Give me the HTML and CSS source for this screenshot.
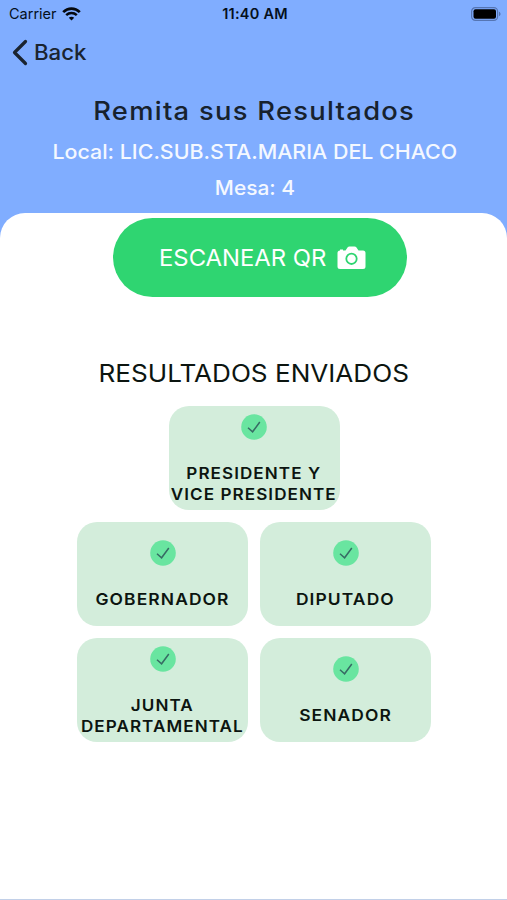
FILE: index.html
```html
<!DOCTYPE html>
<html lang="es">
<head>
<meta charset="utf-8">
<title>Remita sus Resultados</title>
<link rel="stylesheet" href="styles.css">
</head>
<body>
<header class="header">
  <div class="status">
    <div class="carrier"><span>Carrier</span>
      <svg width="19" height="14" viewBox="0 0 19 14" fill="none" stroke="#05080d"><path d="M1.200 5.100C6 .4 13 .4 17.800 5.100" stroke-width="2.700"/><path d="M4.200 8.200c3-2.800 7.600-2.800 10.600 0" stroke-width="2.500"/><path d="M9.500 13.500 6.800 10.800c1.500-1.500 3.900-1.500 5.400 0z" fill="#05080d" stroke="none"/></svg>
    </div>
    <div class="clock">11:40 AM</div>
    <svg class="battery" width="31" height="14" viewBox="0 0 31 14"><rect x="1.600" y=".6" width="26" height="12.800" rx="3.800" fill="none" stroke="#5575b3" stroke-width="1.200"/><rect x="3.500" y="2.300" width="22.500" height="9.400" rx="2" fill="#000"/><path d="M29 4.800c2 .7 2 3.700 0 4.400z" fill="#5575b3"/></svg>
  </div>
  <div class="back">
    <svg width="16" height="27" viewBox="0 0 16 27" fill="none" stroke="#1a2430" stroke-width="3.200" stroke-linecap="round" stroke-linejoin="round"><path d="M13.500 2.500 2.500 13.500l11 11"/></svg>
    <span class="back-label">Back</span>
  </div>
  <h1 class="title"><span>Remita sus Resultados</span></h1>
  <p class="info place"><span>Local: LIC.SUB.STA.MARIA DEL CHACO</span></p>
  <p class="info table"><span>Mesa: 4</span></p>
</header>
<main class="panel">
  <div class="scan">
    <span class="scan-label">ESCANEAR QR</span>
    <svg class="camera" width="29" height="24" viewBox="0 0 29 24"><path d="M3 4.500V3.500h3v1h2.500L10.500 1.500Q11.200.5 12.500.5h5q1.300 0 2 1l2 3H26q2.500 0 2.500 2.500v13.500Q28.500 23 26 23H3Q.5 23 .5 20.500V7Q.5 4.500 3 4.500z" fill="#fff"/><circle cx="14.500" cy="12.800" r="5.200" fill="none" stroke="#2fd571" stroke-width="1.800"/></svg>
  </div>
  <h2 class="heading"><span>RESULTADOS ENVIADOS</span></h2>
  <div class="cards">
    <div class="card card-first"><svg class="check" viewBox="0 0 26 26"><circle cx="13" cy="13" r="12.800"/><path d="m7 13.800 4.600 4 7.200-9.800"/></svg><div class="label"><span>PRESIDENTE Y</span><span>VICE PRESIDENTE</span></div></div>
    <div class="card"><svg class="check" viewBox="0 0 26 26"><circle cx="13" cy="13" r="12.800"/><path d="m7 13.800 4.600 4 7.200-9.800"/></svg><div class="label label-wide"><span>GOBERNADOR</span></div></div>
    <div class="card"><svg class="check" viewBox="0 0 26 26"><circle cx="13" cy="13" r="12.800"/><path d="m7 13.800 4.600 4 7.200-9.800"/></svg><div class="label label-wide"><span>DIPUTADO</span></div></div>
    <div class="card"><svg class="check" viewBox="0 0 26 26"><circle cx="13" cy="13" r="12.800"/><path d="m7 13.800 4.600 4 7.200-9.800"/></svg><div class="label"><span>JUNTA</span><span>DEPARTAMENTAL</span></div></div>
    <div class="card"><svg class="check" viewBox="0 0 26 26"><circle cx="13" cy="13" r="12.800"/><path d="m7 13.800 4.600 4 7.200-9.800"/></svg><div class="label label-wide"><span>SENADOR</span></div></div>
  </div>
</main>
</body>
</html>
```
FILE: styles.css
```css
* { box-sizing: border-box; }
body {
  margin: 0;
  height: 900px;
  overflow: hidden;
  display: flex;
  flex-direction: column;
  background: #80adff;
  font-family: Inter, "Liberation Sans", sans-serif;
  color: #0c1510;
}
h1, h2, p { margin: 0; font-weight: 400; text-align: center; white-space: nowrap; }
.header { height: 213px; flex: none; }
.header span, .heading span, .scan-label, .label span { display: inline-block; white-space: nowrap; }
.status {
  display: grid;
  grid-template-columns: 1fr auto 1fr;
  align-items: center;
  height: 27px;
  padding: 0 6px 0 9px;
  color: #05101c;
  font-size: 14.500px;
}
.carrier { display: flex; align-items: center; gap: 5px; }
.clock { font-weight: 600; letter-spacing: .25px; }
.battery { justify-self: end; }
.back {
  display: flex;
  align-items: center;
  gap: 6px;
  height: 50px;
  padding-left: 12px;
  color: #1a2430;
}
.back-label { font-size: 21px; font-weight: 500; transform: scaleX(1.06); transform-origin: left; }
.title { height: 44px; line-height: 63px; color: #17222e; padding-left: 2px; }
.title span { font-size: 25.500px; font-weight: 500; letter-spacing: 1.200px; transform: scaleX(1.072); }
.info { height: 36px; line-height: 62px; padding-left: 3px; color: #f4f8ff; font-size: 20.300px; font-weight: 500; }
.place span { transform: scaleX(1.055); }
.table span { transform: scaleX(1.03); }
.panel {
  height: 687px;
  flex: none;
  padding-top: 5px;
  background: #fff;
  border-radius: 25px 25px 0 0;
  border-bottom: 1px solid #c2d0e8;
}
.scan {
  display: flex;
  align-items: center;
  gap: 17px;
  width: 294px;
  height: 79px;
  margin-left: 113px;
  padding-left: 46px;
  border-radius: 40px;
  background: #2fd571;
  color: #fff;
  font-size: 23px;
}
.scan-label { transform: scaleX(1.037); transform-origin: left; }
.heading { height: 109px; line-height: 153px; font-size: 24px; padding-left: 1px; }
.heading span { transform: scaleX(1.088); }
.cards {
  display: flex;
  flex-wrap: wrap;
  justify-content: center;
  gap: 12px;
  width: 354px;
  margin-left: 77px;
}
.card {
  display: flex;
  flex-direction: column;
  align-items: center;
  justify-content: center;
  gap: 23px;
  width: 171px;
  height: 104px;
  padding-top: 2px;
  border-radius: 20px;
  background: #d3eddb;
}
.card-first { margin: 0 90px; }
.check { width: 26px; height: 26px; flex: none; fill: #69e5a0; }
.check path { fill: none; stroke: #376b64; stroke-width: 1.500; }
.label {
  display: flex;
  flex-direction: column;
  align-items: center;
  font-size: 16px;
  font-weight: 600;
  line-height: 21px;
  letter-spacing: 1px;
  transform: scaleX(1.067);
}
.label-wide { transform: scaleX(1.09); }
```
